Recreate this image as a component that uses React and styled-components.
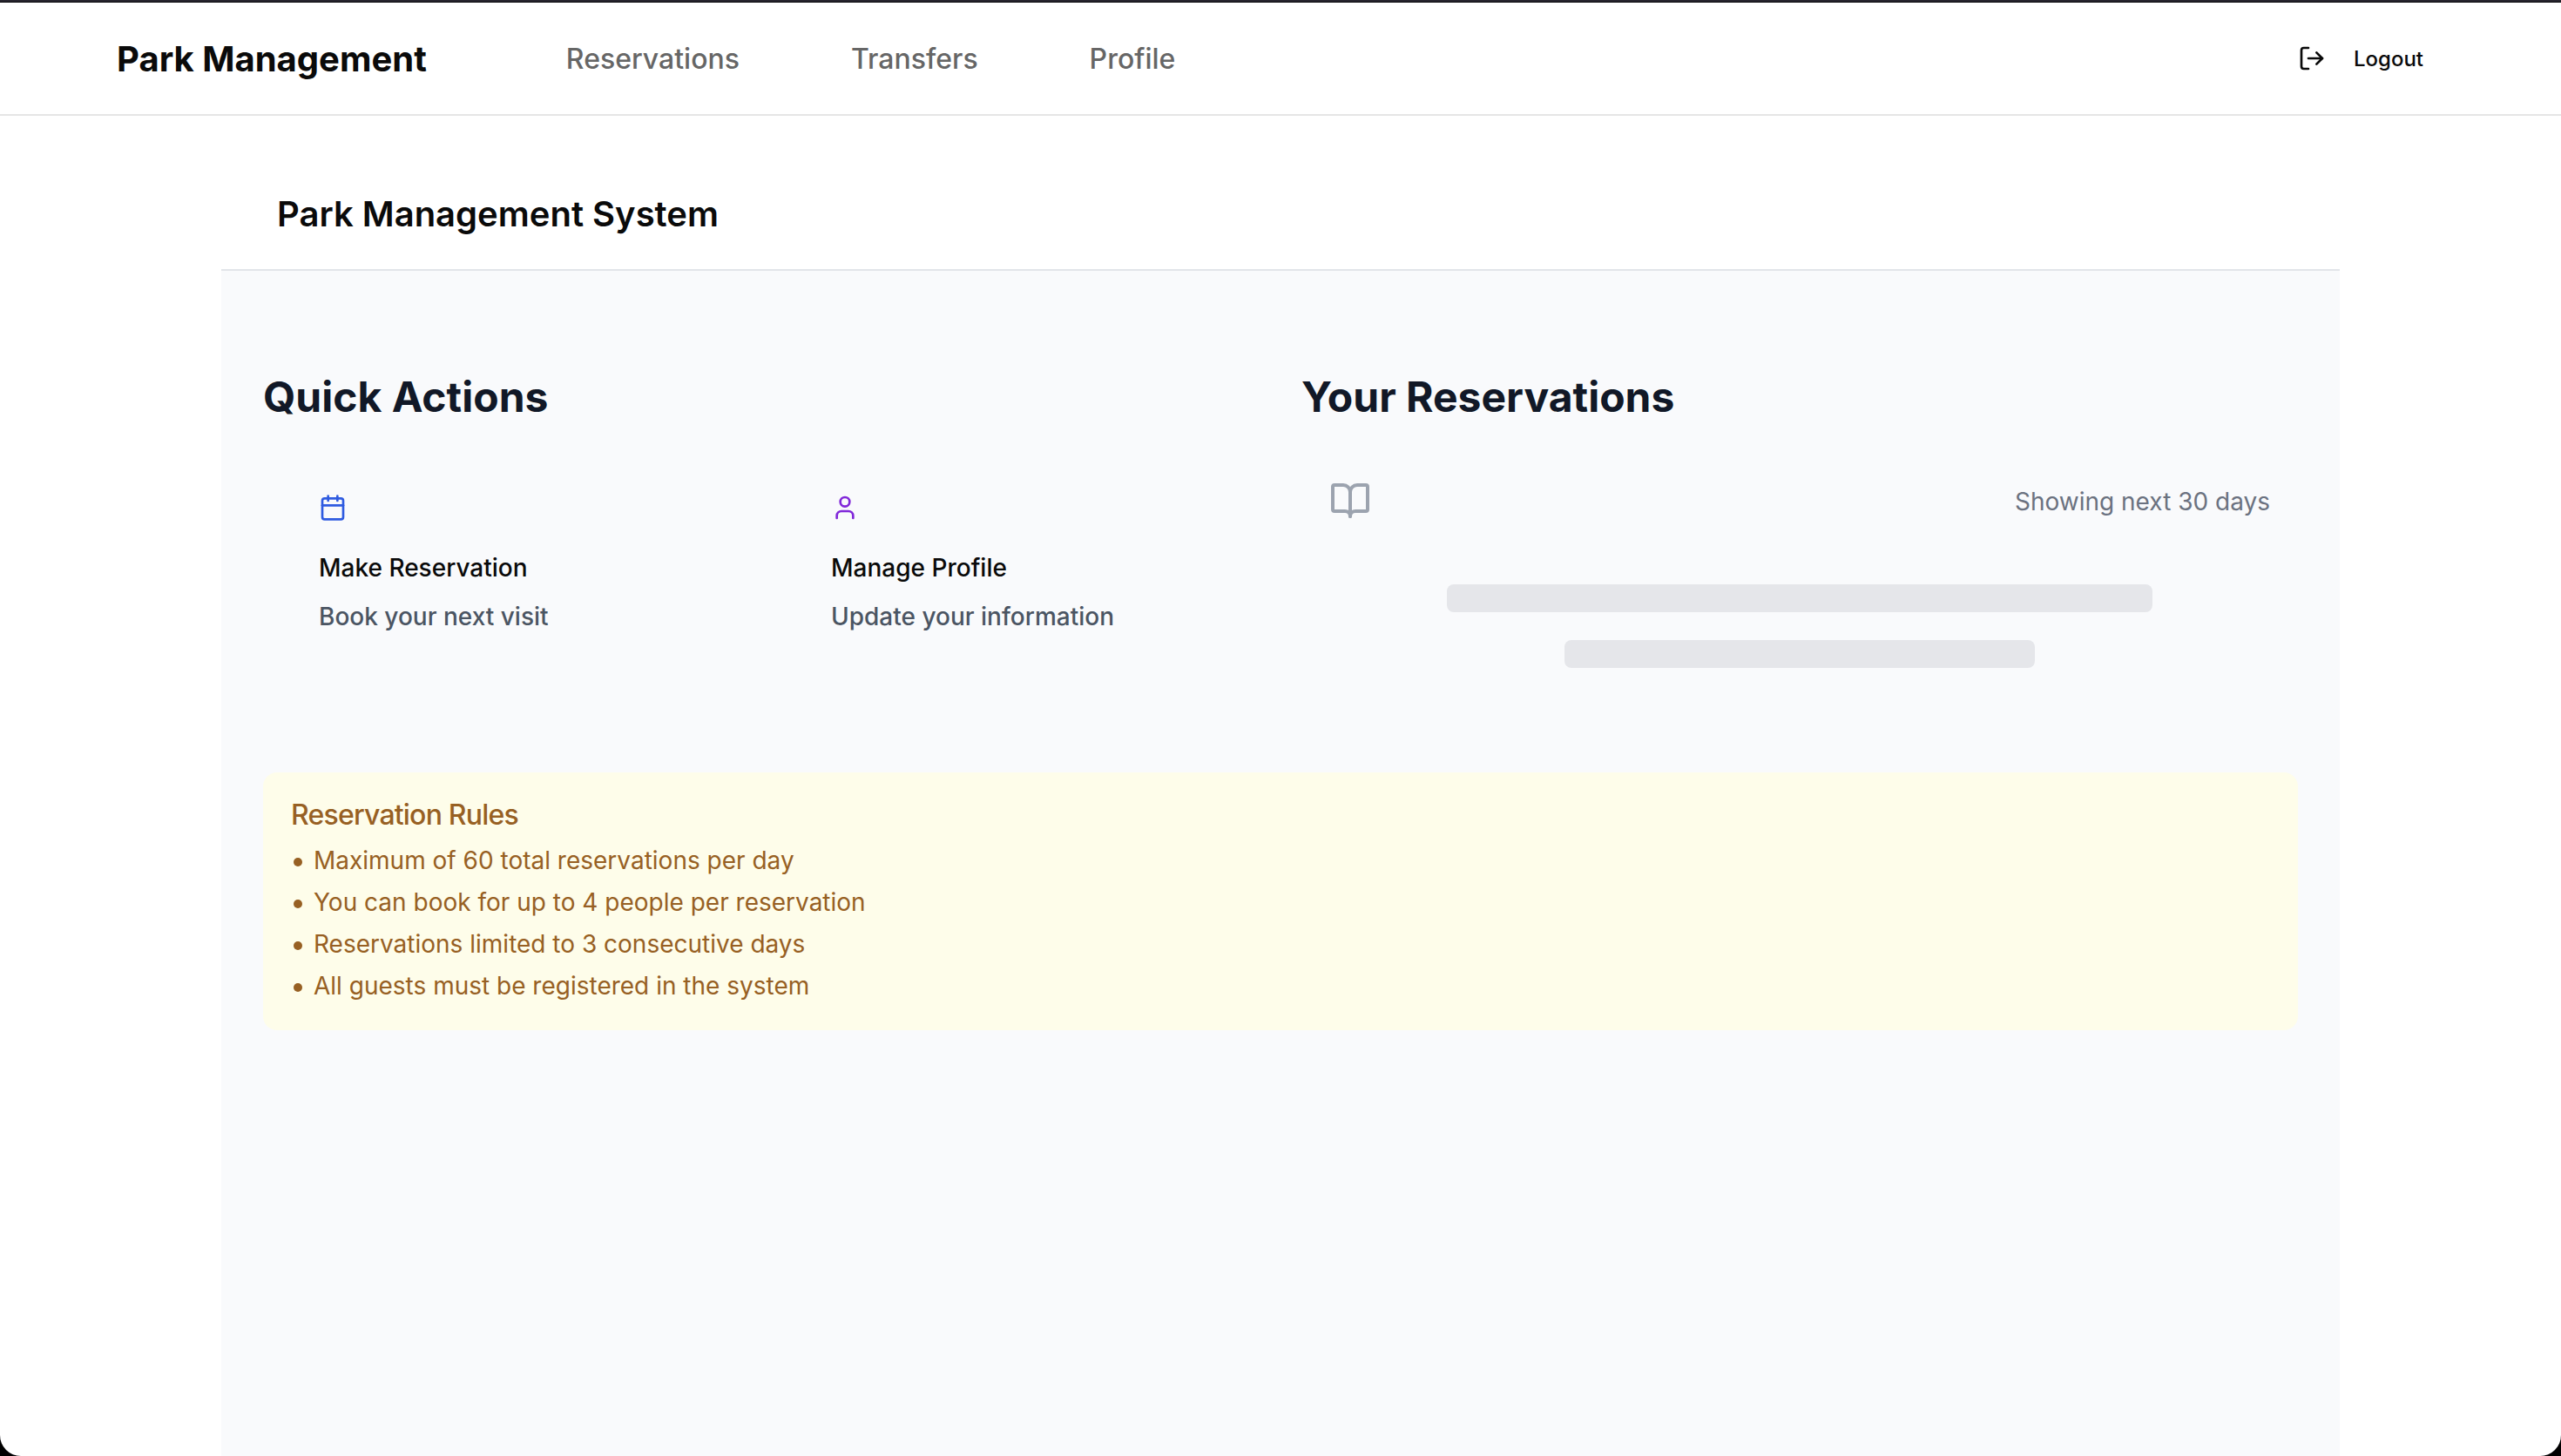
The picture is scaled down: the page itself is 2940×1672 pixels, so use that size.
import React from "react";
import styled, { createGlobalStyle } from "styled-components";
import { BookOpen, Calendar, LogOut, User } from "lucide-react";

const GlobalStyle = createGlobalStyle`
  *, *::before, *::after { box-sizing: border-box; }
  body {
    margin: 0;
    background: #000000;
    color: #0a0a0a;
    font-family: Inter, "Liberation Sans", sans-serif;
    font-size: 28px;
    line-height: 42px;
    -webkit-font-smoothing: antialiased;
  }
  h1, h2, h3, p, ul { margin: 0; padding: 0; }
  a { color: inherit; text-decoration: none; }
  button { font: inherit; color: inherit; background: none; border: 0; padding: 0; cursor: pointer; }
`;

const Window = styled.div`
  min-height: 100vh;
  display: flex;
  flex-direction: column;
  background: #27252e;
  padding-top: 2px;
  border-radius: 0 0 24px 24px;
  overflow: hidden;
`;

const Page = styled.div`
  flex: 1;
  display: flex;
  flex-direction: column;
  background: #ffffff;
  border-top: 1px solid #08080c;
`;

const Header = styled.header`
  border-bottom: 2px solid #e5e5e5;
`;

const HeaderInner = styled.div`
  max-width: 2800px;
  height: 128px;
  margin: 0 auto;
  padding: 0 64px;
  display: flex;
  align-items: center;
  gap: 160px;
`;

const Brand = styled.a`
  padding-top: 2px;
  font-size: 40px;
  line-height: 56px;
  font-weight: 700;
`;

const Nav = styled.nav`
  padding-top: 2px;
  display: flex;
  gap: 128px;
  font-size: 32px;
  line-height: 48px;
  font-weight: 500;
  color: #666666;
`;

const LogoutButton = styled.button`
  margin-left: auto;
  height: 72px;
  padding: 0 24px;
  display: flex;
  align-items: center;
  gap: 32px;
  && {
    font-size: 24px;
    line-height: 32px;
    font-weight: 500;
  }
`;

const LogoutLabel = styled.span`
  padding-top: 2px;
`;

const Main = styled.main`
  flex: 1;
  width: 100%;
  max-width: 2560px;
  margin: 0 auto;
  padding: 48px 64px 0;
  display: flex;
  flex-direction: column;
`;

const TitleBar = styled.div`
  height: 130px;
  padding: 2px 64px 0;
  display: flex;
  align-items: center;
  border-bottom: 2px solid #e2e5e9;
`;

const PageTitle = styled.h1`
  font-size: 40px;
  line-height: 56px;
  font-weight: 600;
`;

const Content = styled.div`
  flex: 1;
  padding: 112px 48px 48px;
  display: flex;
  flex-direction: column;
  gap: 96px;
  background: #f9fafc;
`;

const Columns = styled.div`
  display: grid;
  grid-template-columns: repeat(2, minmax(0, 1fr));
  gap: 48px;
`;

const Section = styled.section`
  display: flex;
  flex-direction: column;
  gap: 62px;
`;

const SectionTitle = styled.h2`
  font-size: 48px;
  line-height: 66px;
  font-weight: 700;
  color: #111827;
`;

const Actions = styled.div`
  display: grid;
  grid-template-columns: repeat(2, minmax(0, 1fr));
  gap: 32px;
`;

const ActionCard = styled.button`
  && {
    padding: 16px 64px 62px;
    display: flex;
    flex-direction: column;
    align-items: flex-start;
    text-align: left;
    font-weight: 500;
  }
`;

const ActionIcon = styled.span`
  display: flex;
  margin-bottom: 32px;
  color: ${(p) => p.$color};
`;

const ActionText = styled.span`
  margin-top: 14px;
  color: #4b5563;
`;

const Reservations = styled.div`
  padding: 0 32px;
`;

const ReservationsTop = styled.div`
  display: flex;
  align-items: center;
  justify-content: space-between;
  margin-bottom: 72px;
  color: #9ca3af;
`;

const RangeNote = styled.p`
  padding-top: 2px;
  color: #6b7280;
`;

const Skeleton = styled.div`
  display: flex;
  flex-direction: column;
  align-items: center;
  gap: 32px;
`;

const SkeletonBar = styled.div`
  width: ${(p) => p.$width};
  height: 32px;
  border-radius: 8px;
  background: #e5e6ea;
`;

const Rules = styled.section`
  padding: 32px 32px 30px;
  border-radius: 16px;
  background: #fefdea;
  color: #976023;
`;

const RulesTitle = styled.h3`
  font-size: 32px;
  line-height: 34px;
  font-weight: 500;
  letter-spacing: -0.025em;
  margin-bottom: 14px;
`;

const RulesList = styled.ul`
  list-style: none;
  display: flex;
  flex-direction: column;
  gap: 6px;
`;

const Rule = styled.li`
  display: flex;
  align-items: flex-start;

  &::before {
    content: "";
    flex: none;
    width: 10px;
    height: 10px;
    margin: 18px 13px 0 3px;
    border-radius: 50%;
    background: currentColor;
  }
`;

const links = ["Reservations", "Transfers", "Profile"];

const actions = [
  { title: "Make Reservation", text: "Book your next visit", Icon: Calendar, color: "#2f5be0" },
  { title: "Manage Profile", text: "Update your information", Icon: User, color: "#8128d9" },
];

const rules = [
  "Maximum of 60 total reservations per day",
  "You can book for up to 4 people per reservation",
  "Reservations limited to 3 consecutive days",
  "All guests must be registered in the system",
];

export default function App() {
  return (
    <>
      <GlobalStyle />
      <Window>
        <Page>
          <Header>
            <HeaderInner>
              <Brand href="#">Park Management</Brand>
              <Nav>
                {links.map((label) => (
                  <a key={label} href={`#${label.toLowerCase()}`}>{label}</a>
                ))}
              </Nav>
              <LogoutButton type="button">
                <LogOut size={32} />
                <LogoutLabel>Logout</LogoutLabel>
              </LogoutButton>
            </HeaderInner>
          </Header>
          <Main>
            <TitleBar>
              <PageTitle>Park Management System</PageTitle>
            </TitleBar>
            <Content>
              <Columns>
                <Section>
                  <SectionTitle>Quick Actions</SectionTitle>
                  <Actions>
                    {actions.map(({ title, text, Icon, color }) => (
                      <ActionCard key={title} type="button">
                        <ActionIcon $color={color}><Icon size={32} /></ActionIcon>
                        <span>{title}</span>
                        <ActionText>{text}</ActionText>
                      </ActionCard>
                    ))}
                  </Actions>
                </Section>
                <Section>
                  <SectionTitle>Your Reservations</SectionTitle>
                  <Reservations>
                    <ReservationsTop>
                      <BookOpen size={48} />
                      <RangeNote>Showing next 30 days</RangeNote>
                    </ReservationsTop>
                    <Skeleton>
                      <SkeletonBar $width="75%" />
                      <SkeletonBar $width="50%" />
                    </Skeleton>
                  </Reservations>
                </Section>
              </Columns>
              <Rules>
                <RulesTitle>Reservation Rules</RulesTitle>
                <RulesList>
                  {rules.map((rule) => (
                    <Rule key={rule}>{rule}</Rule>
                  ))}
                </RulesList>
              </Rules>
            </Content>
          </Main>
        </Page>
      </Window>
    </>
  );
}
